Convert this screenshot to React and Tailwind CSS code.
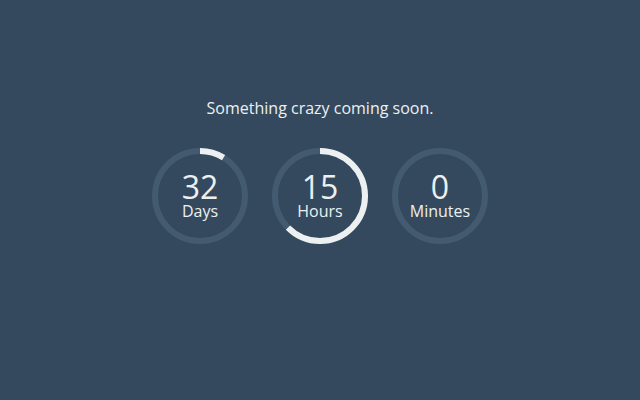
import React from "react";

const units = [
  { value: 32, label: "Days", progress: 32 / 365 },
  { value: 15, label: "Hours", progress: 15 / 24 },
  { value: 0, label: "Minutes", progress: 0 },
];

function Ring({ value, label, progress }) {
  const r = 45;
  const c = 2 * Math.PI * r;
  return (
    <div className="relative w-[96px] h-[96px]">
      <svg width="96" height="96" viewBox="0 0 96 96" className="-rotate-90">
        <circle cx="48" cy="48" r={r} fill="none" stroke="#435a70" strokeWidth="6" />
        {progress > 0 && (
          <circle
            cx="48"
            cy="48"
            r={r}
            fill="none"
            stroke="#ecf0f1"
            strokeWidth="6"
            strokeDasharray={`${c * progress} ${c}`}
          />
        )}
      </svg>
      <div className="absolute inset-0 flex flex-col items-center justify-center pb-[3px] text-[#ecf0f1]">
        <div className="text-[32px] leading-none">{value}</div>
        <div className="text-[16px] leading-none">{label}</div>
      </div>
    </div>
  );
}

export default function App() {
  return (
    <div className="w-[640px] h-[400px] bg-[#34495e] font-['Open_Sans',sans-serif] flex flex-col items-center pt-[96px]">
      <p className="text-[16px] leading-6 text-[#ecf0f1]">Something crazy coming soon.</p>
      <div className="flex gap-6 mt-7">
        {units.map((u) => (
          <Ring key={u.label} {...u} />
        ))}
      </div>
    </div>
  );
}
